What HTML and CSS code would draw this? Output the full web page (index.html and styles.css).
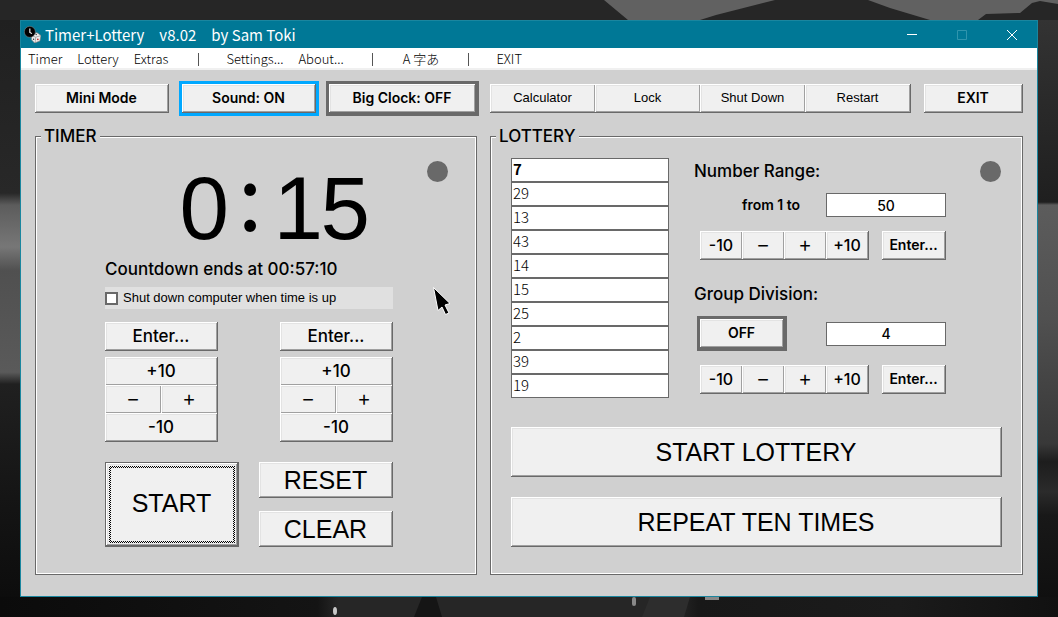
FILE: index.html
```html
<!DOCTYPE html>
<html lang="en">
<head>
<meta charset="utf-8">
<title>Timer+Lottery</title>
<link rel="stylesheet" href="styles.css">
</head>
<body>
<svg class="wallpaper" viewBox="0 0 1058 617" preserveAspectRatio="none" aria-hidden="true">
  <defs>
    <linearGradient id="shore" x1="0" y1="0" x2="0" y2="1">
      <stop offset="0" stop-color="#202020"/><stop offset=".29" stop-color="#282828"/>
      <stop offset=".31" stop-color="#5c5c5c"/><stop offset=".38" stop-color="#777"/>
      <stop offset=".42" stop-color="#505050"/><stop offset=".59" stop-color="#5a5a5a"/>
      <stop offset=".61" stop-color="#202020"/><stop offset=".8" stop-color="#151515"/>
      <stop offset="1" stop-color="#0b0b0b"/>
    </linearGradient>
    <linearGradient id="lake" x1="0" y1="0" x2="0" y2="1">
      <stop offset="0" stop-color="#333"/><stop offset=".305" stop-color="#1f1f1f"/>
      <stop offset=".31" stop-color="#5c5c5c"/><stop offset=".5" stop-color="#505050"/>
      <stop offset=".71" stop-color="#383838"/><stop offset=".74" stop-color="#1d1d1d"/>
      <stop offset=".79" stop-color="#2b2b2b"/><stop offset=".83" stop-color="#181818"/>
      <stop offset="1" stop-color="#0e0e0e"/>
    </linearGradient>
    <linearGradient id="ground">
      <stop offset="0" stop-color="#0b0b0b"/><stop offset=".3" stop-color="#141414"/>
      <stop offset=".32" stop-color="#262626"/><stop offset=".64" stop-color="#262626"/>
      <stop offset=".66" stop-color="#181818"/><stop offset=".85" stop-color="#1b1b1b"/>
      <stop offset="1" stop-color="#111"/>
    </linearGradient>
  </defs>
  <rect width="1058" height="617" fill="#262626"/>
  <path fill="#616161" d="M604 0 628 20H700L716 15 775 0ZM868 0 890 8 930 20H978L986 14 1020 13 1032 3 1040 1 1058 4V0Z"/>
  <rect y="20" width="21" height="597" fill="url(#shore)"/>
  <rect x="1037" y="20" width="21" height="597" fill="url(#lake)"/>
  <rect y="597" width="1058" height="20" fill="url(#ground)"/>
  <path fill="#151515" d="M422 597H436L442 617H414Z"/>
  <path fill="#2d2d2d" d="M650 597H690L684 617H642Z"/>
  <ellipse cx="335" cy="611" rx="2" ry="4" fill="#c8c8c8"/>
  <rect x="632" y="597" width="4" height="9" rx="2" fill="#888"/>
  <rect x="705" y="597" width="14" height="3" fill="#888"/>
</svg>
<main class="window">
  <header class="titlebar">
    <svg class="app-icon" viewBox="0 0 16 16" aria-hidden="true">
      <path d="M7 9 12 6 16 9 15 14 10 16 7 13Z" fill="#eee" stroke="#777" stroke-width=".6"/>
      <path d="M7 9 11 10.500 16 9M11 10.500 10.500 16" stroke="#888" fill="none" stroke-width=".6"/>
      <circle cx="13" cy="12.500" r=".8" fill="#b22"/><circle cx="9" cy="12.500" r=".7" fill="#333"/><circle cx="11.500" cy="8" r=".7" fill="#333"/>
      <circle cx="5.500" cy="5.500" r="5.200" fill="#000" stroke="#888" stroke-width=".5"/>
      <path d="M5.500 2.300V6L7.500 7.200" stroke="#fff" fill="none"/>
    </svg>
    <h1 class="title"><span>Timer+Lottery</span><span>v8.02</span><span>by Sam Toki</span></h1>
    <div class="caption">
      <button aria-label="Minimize"><svg viewBox="0 0 10 10"><path d="M0 4.500H10"/></svg></button>
      <button aria-label="Maximize" disabled><svg viewBox="0 0 10 10"><path d="M.5.500H9.500V9.500H.5Z"/></svg></button>
      <button aria-label="Close"><svg viewBox="0 0 10 10"><path d="M0 0 10 10M10 0 0 10"/></svg></button>
    </div>
  </header>
  <nav class="menu">
    <div class="menu-group first"><button>Timer</button><button>Lottery</button><button>Extras</button></div>
    <div class="menu-group"><button>Settings...</button><button>About...</button></div>
    <div class="menu-group third"><button>A 字あ</button></div>
    <div class="menu-group"><button>EXIT</button></div>
  </nav>
  <div class="content">
    <div class="side-timer toolbar">
      <button class="btn bold mini">Mini Mode</button>
      <span class="ring on"><button class="btn bold">Sound: ON</button></span>
      <span class="ring wide"><button class="btn bold">Big Clock: OFF</button></span>
    </div>
    <div class="side-lottery toolbar">
      <div class="joined tools">
        <button class="btn">Calculator</button><button class="btn">Lock</button><button class="btn">Shut Down</button><button class="btn">Restart</button>
      </div>
      <button class="btn bold exit">EXIT</button>
    </div>

    <fieldset class="panel timer">
      <legend>TIMER</legend>
      <span class="lamp"></span>
      <div class="timer-body">
        <div class="clock"><span>0</span><span class="colon">:</span><span>1</span><span>5</span></div>
        <p class="ends">Countdown ends at 00:57:10</p>
        <label class="shutdown"><input type="checkbox">Shut down computer when time is up</label>
        <div class="adjusters">
          <div class="adjust">
            <button class="btn mid">Enter...</button>
            <div class="pad"><button class="btn mid full">+10</button><button class="btn sign">−</button><button class="btn sign">+</button><button class="btn mid full">-10</button></div>
          </div>
          <div class="adjust">
            <button class="btn mid">Enter...</button>
            <div class="pad"><button class="btn mid full">+10</button><button class="btn sign">−</button><button class="btn sign">+</button><button class="btn mid full">-10</button></div>
          </div>
        </div>
        <div class="actions">
          <button class="btn big start">START</button>
          <button class="btn big">RESET</button>
          <button class="btn big">CLEAR</button>
        </div>
      </div>
    </fieldset>

    <fieldset class="panel lottery">
      <legend>LOTTERY</legend>
      <span class="lamp"></span>
      <div class="lottery-top">
        <div class="results">
          <input class="latest" aria-label="Result 1" value="7">
          <input aria-label="Result 2" value="29">
          <input aria-label="Result 3" value="13">
          <input aria-label="Result 4" value="43">
          <input aria-label="Result 5" value="14">
          <input aria-label="Result 6" value="15">
          <input aria-label="Result 7" value="25">
          <input aria-label="Result 8" value="2">
          <input aria-label="Result 9" value="39">
          <input aria-label="Result 10" value="19">
        </div>
        <div class="settings">
          <section class="setting">
            <h2>Number Range:</h2>
            <div class="value-row"><label class="caption-text" for="range">from 1 to</label><input id="range" class="value" value="50"></div>
            <div class="step-row">
              <div class="joined steps"><button class="btn mid">-10</button><button class="btn sign">−</button><button class="btn sign">+</button><button class="btn mid">+10</button></div>
              <button class="btn bold enter">Enter...</button>
            </div>
          </section>
          <section class="setting">
            <h2>Group Division:</h2>
            <div class="value-row"><span class="ring off"><button class="btn bold">OFF</button></span><input class="value" aria-label="Group division" value="4"></div>
            <div class="step-row">
              <div class="joined steps"><button class="btn mid">-10</button><button class="btn sign">−</button><button class="btn sign">+</button><button class="btn mid">+10</button></div>
              <button class="btn bold enter">Enter...</button>
            </div>
          </section>
        </div>
      </div>
      <div class="draws">
        <button class="btn big">START LOTTERY</button>
        <button class="btn big">REPEAT TEN TIMES</button>
      </div>
    </fieldset>
  </div>
</main>
<svg class="pointer" viewBox="0 0 18 28" aria-hidden="true"><path d="M.5.500 17 16.500 12 18 16 26 12.500 27.500 9 20 5 23.500Z" fill="#000" stroke="#fff"/></svg>
</body>
</html>
```
FILE: styles.css
```css
* { box-sizing: border-box; }
body {
  margin: 0;
  min-height: 100vh;
  padding: 20px;
  display: flex;
  background: #222;
  color: #000;
  font: 13px/20px "Liberation Sans", Arial, sans-serif;
}
button, input { font: inherit; color: inherit; margin: 0; }
button { border: 0; padding: 0; background: none; white-space: nowrap; }
h1, h2, p { margin: 0; font-weight: 400; }

.wallpaper { position: fixed; inset: 0; width: 100%; height: 100%; z-index: -1; }

.window {
  flex: 1;
  display: flex;
  flex-direction: column;
  background: #d0d0d0;
  border: 1px solid #1a869f;
}
.titlebar {
  display: flex;
  align-items: center;
  height: 27px;
  padding-left: 3px;
  background: #007896;
  color: #fff;
}
.app-icon { width: 17px; height: 17px; margin-right: 4px; }
.title { display: flex; gap: 15px; flex: 1; font: 15px/27px "Noto Sans CJK JP", sans-serif; }
.caption { display: flex; }
.caption button { width: 50px; height: 27px; display: grid; place-items: center; }
.caption svg { width: 10px; height: 10px; fill: none; stroke: #fff; }
.caption button:disabled svg { stroke: #3095ad; }

.menu {
  display: flex;
  height: 22px;
  background: #fff;
  border-bottom: 2px solid #f0f0f0;
  font: 300 13px/20px "Noto Sans CJK JP", sans-serif;
}
.menu-group { display: flex; gap: 15px; align-items: center; padding: 2px 28px 0; }
.menu-group + .menu-group { background: linear-gradient(#555, #555) 0 5px / 1px 13px no-repeat; }
.menu-group.first { padding-left: 7px; padding-right: 30px; }
.menu-group.third { padding-left: 31px; padding-right: 29px; }

.content {
  flex: 1;
  display: grid;
  grid-template-columns: 442fr 533fr;
  grid-template-rows: auto 1fr;
  gap: 10px 13px;
  padding: 11px 14px 21px;
}
.toolbar { display: flex; align-items: center; height: 35px; }
.side-timer { margin-right: -2px; }
.side-lottery { justify-content: space-between; }

.btn {
  height: 29px;
  padding: 0 1px 1px 0;
  background: #f0f0f0;
  box-shadow: inset -1px -1px #696969, inset 1px 1px #fff, inset -2px -2px #a0a0a0, inset 2px 2px #e3e3e3;
}
.bold { font: 600 14px/20px Inter, sans-serif; }
.mid { font: 500 17px/20px Inter, sans-serif; }
.sign { font: 20px/20px "Noto Sans CJK JP", sans-serif; }
.big { font-size: 25px; line-height: 28px; }
.steps .mid { font-size: 16px; }
.ring { display: flex; padding: 3px; background: #696969; }
.ring .btn { flex: 1; }
.mini { flex: 1 1 134px; margin-right: 10px; }
.ring.on { flex: 1 1 140px; margin-right: 7px; background: #00a8ff; }
.ring.wide { flex: 1 1 153px; }
.ring.off { width: 90px; }
.exit { width: 99px; }
.joined { display: flex; }
.joined .btn { flex: 1; }
.joined .btn + .btn { margin-left: -1px; }
.tools { flex: 1; margin-right: 13px; }

.panel {
  position: relative;
  min-width: 0;
  margin: 0;
  border: 1px solid #696969;
  box-shadow: inset 1px 1px #fff, inset -1px -1px #fff;
  padding: 0;
}
.panel legend { padding: 0 3px; margin-left: 5px; background: #d0d0d0; font: 500 17px/20px Inter, sans-serif; }
.lamp { position: absolute; top: 15px; right: 28px; width: 21px; height: 21px; border-radius: 50%; background: #696969; }
.lottery .lamp { right: 21px; }

.timer-body { width: 302px; margin: 17px auto 0; padding-right: 14px; }
.clock {
  display: grid;
  grid-template-columns: repeat(4, 47px);
  justify-content: center;
  height: 90px;
  margin: 0 0 6px 49px;
  font-size: 89px;
  line-height: 90px;
  text-align: center;
}
.colon { font-family: "Noto Sans CJK JP", sans-serif; line-height: 60px; }
.ends, .setting h2 { font: 500 17px/20px Inter, sans-serif; white-space: nowrap; }
.shutdown { display: flex; align-items: center; gap: 5px; height: 22px; margin-top: 8px; background: #e0e0e0; }
.shutdown input { appearance: none; width: 13px; height: 13px; border: 2px solid #696969; background: #fff; }
.adjusters { display: flex; justify-content: space-between; margin-top: 13px; }
.adjust { display: grid; gap: 6px; width: 113px; }
.pad { display: flex; flex-wrap: wrap; }
.pad .full { width: 113px; }
.pad .sign { width: 57px; margin: -1px 0; }
.pad .sign + .sign { margin-left: -1px; }
.actions { display: grid; grid-template: 36px 36px / 134px 134px; gap: 13px 20px; margin-top: 20px; }
.actions .btn { height: auto; }
.actions .start {
  grid-row: span 2;
  position: relative;
  isolation: isolate;
  padding-bottom: 3px;
  border: 1px solid #696969;
}
.start::after {
  content: "";
  position: absolute;
  inset: 3px;
  z-index: -1;
  border: 2px solid transparent;
  background:
    linear-gradient(#f0f0f0, #f0f0f0) padding-box,
    repeating-conic-gradient(#000 0 25%, #f0f0f0 0 50%) border-box 0 0 / 2px 2px;
}

.lottery-top { display: flex; gap: 25px; margin: 12px 20px 0; }
.results { display: grid; width: 158px; }
.results input, .value { height: 24px; border: 1px solid #696969; background: #fff; border-radius: 0; }
.results input { width: 100%; padding: 0 1px 3px; font: 300 15px/19px "Noto Sans CJK JP", sans-serif; }
.results .latest { font-weight: 700; }
.settings { display: grid; gap: 24px; width: 252px; align-content: start; padding-top: 3px; }
.value-row { display: flex; justify-content: space-between; align-items: center; margin-top: 12px; padding-left: 3px; }
.caption-text { margin-left: 45px; font: 600 14px/20px Inter, sans-serif; }
.value { width: 120px; text-align: center; font: 500 14px/20px Inter, sans-serif; }
.step-row { display: flex; justify-content: space-between; margin-top: 14px; padding-left: 6px; }
.steps { width: 169px; }
.enter { width: 64px; }
.draws { display: grid; gap: 20px; margin: 29px 20px 0; }
.draws .btn { height: 50px; }

.pointer { position: absolute; left: 433px; top: 287px; width: 18px; height: 28px; }
```
